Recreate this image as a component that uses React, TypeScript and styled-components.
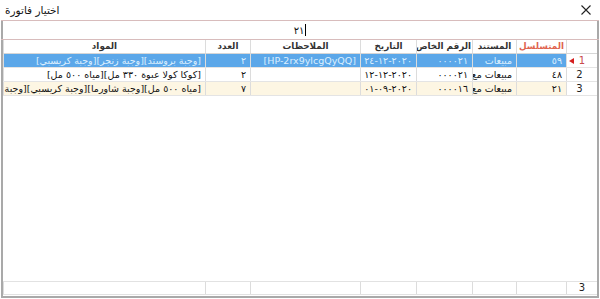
import styled, { createGlobalStyle } from "styled-components";

const GlobalStyle = createGlobalStyle`
  html, body {
    margin: 0;
    padding: 0;
    background: #ffffff;
  }
  body {
    font-family: "DejaVu Sans", "Noto Sans", sans-serif;
  }
`;

const COLUMNS = "31px 50px 44px 56px 56px 110px 45px 1fr";

const Window = styled.div`
  width: 600px;
  height: 299px;
  display: flex;
  flex-direction: column;
  background: #ffffff;
  overflow: hidden;
`;

const TitleBar = styled.div`
  height: 20px;
  flex-shrink: 0;
  display: flex;
  align-items: center;
  justify-content: space-between;
  padding: 0 9px 0 5px;
  font-size: 10.5px;
  color: #111;
`;

const CloseIcon = styled.svg`
  display: block;
`;

const Frame = styled.div`
  flex: 1;
  display: flex;
  flex-direction: column;
  margin: 0 1px 1px 1px;
  border: 2px solid #a9a9a9;
  border-top: none;
  min-height: 0;
`;

const SearchBar = styled.div`
  height: 18px;
  flex-shrink: 0;
  display: flex;
  align-items: center;
  justify-content: center;
  border-top: 1px solid #d8bcbc;
  border-bottom: 1px solid #d8bcbc;
  margin: 0 -2px;
  font-size: 10px;
  color: #111;
`;

const Caret = styled.span`
  display: inline-block;
  width: 1px;
  height: 12px;
  background: #000;
  margin-left: 1px;
`;

const Grid = styled.div`
  flex: 1;
  display: flex;
  flex-direction: column;
  margin: 0 0 1px 0;
  min-height: 0;
`;

const Row = styled.div<{ $bg?: string; $header?: boolean }>`
  display: grid;
  grid-template-columns: ${COLUMNS};
  direction: rtl;
  height: 14px;
  background: ${(p) => p.$bg || "#ffffff"};
  border-bottom: 1px solid ${(p) => (p.$header ? "#d6d6d6" : "#e4e4e4")};
  box-sizing: border-box;
`;

const Cell = styled.div<{ $color?: string }>`
  border-left: 1px solid #dcdcdc;
  padding: 0 4px;
  font-size: 9.5px;
  line-height: 13px;
  white-space: nowrap;
  overflow: hidden;
  text-align: right;
  color: ${(p) => p.$color || "#111"};
`;

const HeaderCell = styled.div<{ $color?: string }>`
  border-left: 1px solid #dcdcdc;
  padding: 0 1px;
  font-size: 8.8px;
  font-weight: bold;
  line-height: 13px;
  white-space: nowrap;
  overflow: hidden;
  text-align: center;
  color: ${(p) => p.$color || "#333"};
`;

const IndicatorCell = styled.div<{ $color?: string }>`
  direction: ltr;
  display: flex;
  align-items: center;
  background: #ffffff;
  padding: 0 7px 0 2px;
  font-size: 10px;
  color: ${(p) => p.$color || "#222"};
  border-left: 1px solid #dcdcdc;
`;

const Marker = styled.span`
  width: 0;
  height: 0;
  border-top: 3px solid transparent;
  border-bottom: 3px solid transparent;
  border-right: 5px solid #d42020;
`;

const RowNumber = styled.span`
  flex: 1;
  text-align: center;
`;

const Spacer = styled.div`
  flex: 1;
`;

const Footer = styled.div`
  display: grid;
  grid-template-columns: ${COLUMNS};
  direction: rtl;
  height: 14px;
  border-top: 1px solid #e2e2e2;
  border-bottom: 1px solid #e2e2e2;
  box-sizing: border-box;
`;

const FooterCell = styled.div`
  border-left: 1px solid #dcdcdc;
  font-size: 10px;
  line-height: 12px;
  text-align: center;
  color: #222;
`;

const HEADERS = ["المتسلسل", "المستند", "الرقم الخاص", "التاريخ", "الملاحظات", "العدد", "المواد"];

type Invoice = {
  serial: string;
  doc: string;
  code: string;
  date: string;
  notes: string;
  count: string;
  items: string;
};

const ROWS: Invoice[] = [
  {
    serial: "٥٩",
    doc: "مبيعات",
    code: "٠٠٠٠٢١",
    date: "٢٠٢٠-١٢-٢٤",
    notes: "[HP-2rx9ylcgQyQQ]",
    count: "٢",
    items: "[وجبة بروستد][وجبة زنجر][وجبة كريسبي]",
  },
  {
    serial: "٤٨",
    doc: "مبيعات مع",
    code: "٠٠٠٠٢١",
    date: "٢٠٢٠-١٢-١٢",
    notes: "",
    count: "٢",
    items: "[كوكا كولا عبوة ٣٣٠ مل][مياه ٥٠٠ مل]",
  },
  {
    serial: "٢١",
    doc: "مبيعات مع",
    code: "٠٠٠٠١٦",
    date: "٢٠٢٠-٠٩-٠١",
    notes: "",
    count: "٧",
    items: "[مياه ٥٠٠ مل][وجبة شاورما][وجبة كريسبي][وجبة منسف]",
  },
];

export default function App() {
  return (
    <>
      <GlobalStyle />
      <Window>
        <TitleBar>
          <span>اختيار فاتورة</span>
          <CloseIcon width="10" height="10" viewBox="0 0 10 10">
            <path d="M0.5 0.5L9.5 9.5M9.5 0.5L0.5 9.5" stroke="#222" strokeWidth="1.1" />
          </CloseIcon>
        </TitleBar>
        <Frame>
          <SearchBar>
            <span>٢١</span>
            <Caret />
          </SearchBar>
          <Grid>
            <Row $header>
              <IndicatorCell />
              {HEADERS.map((h, i) => (
                <HeaderCell key={h} $color={i === 0 ? "#e0644f" : "#333"}>
                  {h}
                </HeaderCell>
              ))}
            </Row>
            {ROWS.map((r, i) => {
              const selected = i === 0;
              const text = selected ? "#dcefff" : "#111";
              return (
                <Row key={r.serial} $bg={selected ? "#5ba7e9" : i === 2 ? "#fdf6e3" : "#ffffff"}>
                  <IndicatorCell $color={selected ? "#c84a4a" : "#222"}>
                    {selected ? <Marker /> : <span />}
                    <RowNumber>{i + 1}</RowNumber>
                  </IndicatorCell>
                  <Cell $color={text}>{r.serial}</Cell>
                  <Cell $color={text}>{r.doc}</Cell>
                  <Cell $color={text}>{r.code}</Cell>
                  <Cell $color={text}>{r.date}</Cell>
                  <Cell $color={text}>{r.notes}</Cell>
                  <Cell $color={text}>{r.count}</Cell>
                  <Cell $color={text}>{r.items}</Cell>
                </Row>
              );
            })}
            <Spacer />
            <Footer>
              <FooterCell>3</FooterCell>
              <FooterCell />
              <FooterCell />
              <FooterCell />
              <FooterCell />
              <FooterCell />
              <FooterCell />
              <FooterCell />
            </Footer>
          </Grid>
        </Frame>
      </Window>
    </>
  );
}
